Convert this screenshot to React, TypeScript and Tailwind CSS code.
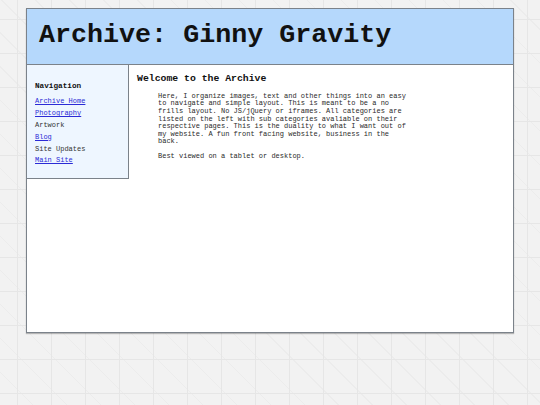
const links = [
  { label: "Archive Home", href: true },
  { label: "Photography", href: true },
  { label: "Artwork", href: false },
  { label: "Blog", href: true },
  { label: "Site Updates", href: false },
  { label: "Main Site", href: true },
];

const mono = "font-['Courier_New','Liberation_Mono',monospace]";

export default function App() {
  return (
    <div
      className={`min-h-[405px] w-full pt-[8px] bg-[#f2f2f2] [background-image:linear-gradient(to_right,#e6e6e6_1px,transparent_1px),linear-gradient(to_bottom,#e6e6e6_1px,transparent_1px),repeating-linear-gradient(45deg,transparent_0,transparent_23px,#ececec_23px,#ececec_24px)] [background-size:34px_34px,34px_34px,auto] [background-position:17px_19px,17px_19px,0_0] ${mono}`}
    >
      <div className="mx-auto flex h-[325px] w-[488px] flex-col border border-[#7b828a] bg-white shadow-[0_1px_1px_rgba(0,0,0,0.25)]">
        <header className="h-[56px] shrink-0 border-b border-[#7b828a] bg-[#b5d8fc] pl-[12px] pt-[10px]">
          <h1 className="text-[26.7px] font-bold leading-[32px] text-[#111]">
            Archive: Ginny Gravity
          </h1>
        </header>
        <div className="flex flex-1 items-start">
          <nav className="w-[102px] shrink-0 border-b border-r border-[#7b828a] bg-[#eef6ff] pb-[10.5px] pl-[8px] pt-[15.5px]">
            <h3 className="text-[7.7px] font-bold leading-[10px] text-[#111]">Navigation</h3>
            <ul className="mt-[5.7px]">
              {links.map((l) => (
                <li key={l.label} className="h-[11.85px] text-[7px] leading-[11.85px]">
                  {l.href ? (
                    <a href="#" className="text-[#2b2bd6] underline">
                      {l.label}
                    </a>
                  ) : (
                    <span className="text-[#333]">{l.label}</span>
                  )}
                </li>
              ))}
            </ul>
          </nav>
          <main className="flex-1 pl-[8px] pt-[7.5px]">
            <h2 className="text-[9.8px] font-bold leading-[12px] text-[#111]">
              Welcome to the Archive
            </h2>
            <div className="ml-[21px] mt-[8.4px] w-[253px] text-[7px] leading-[7.55px] text-[#2a2a2a]">
              <p>
                Here, I organize images, text and other things into an easy to navigate and
                simple layout. This is meant to be a no frills layout. No JS/jQuery or
                iframes. All categories are listed on the left with sub categories avaliable
                on their respective pages. This is the duality to what I want out of my
                website. A fun front facing website, business in the back.
              </p>
              <p className="mt-[7.6px]">Best viewed on a tablet or desktop.</p>
            </div>
          </main>
        </div>
      </div>
    </div>
  );
}
